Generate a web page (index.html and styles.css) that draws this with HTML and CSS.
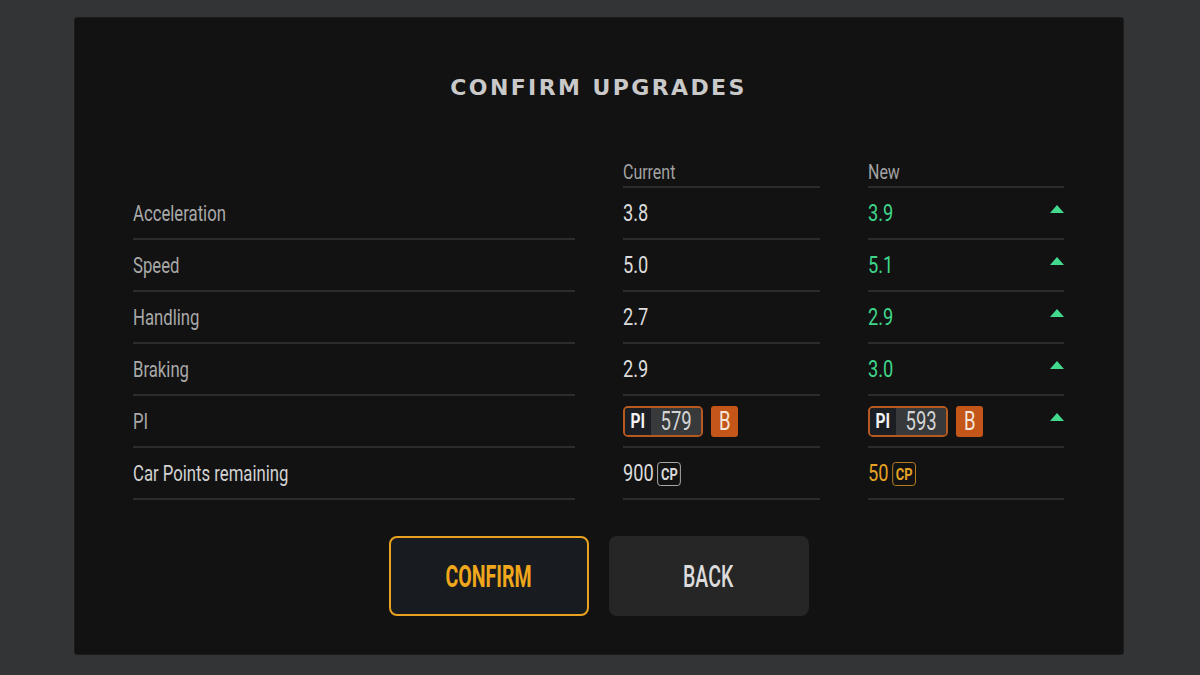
FILE: index.html
```html
<!DOCTYPE html>
<html>
<head>
<meta charset="utf-8">
<link rel="stylesheet" href="styles.css">
</head>
<body>
<div class="panel">
  <h1 class="title">CONFIRM UPGRADES</h1>
  <div class="table">
    <div class="cell head blank"></div>
    <div class="cell head"><span class="t">Current</span></div>
    <div class="cell head"><span class="t">New</span></div>

    <div class="cell label"><span class="t">Acceleration</span></div>
    <div class="cell val"><span class="t">3.8</span></div>
    <div class="cell val up"><span class="t">3.9</span><span class="tri"></span></div>

    <div class="cell label"><span class="t">Speed</span></div>
    <div class="cell val"><span class="t">5.0</span></div>
    <div class="cell val up"><span class="t">5.1</span><span class="tri"></span></div>

    <div class="cell label"><span class="t">Handling</span></div>
    <div class="cell val"><span class="t">2.7</span></div>
    <div class="cell val up"><span class="t">2.9</span><span class="tri"></span></div>

    <div class="cell label"><span class="t">Braking</span></div>
    <div class="cell val"><span class="t">2.9</span></div>
    <div class="cell val up"><span class="t">3.0</span><span class="tri"></span></div>

    <div class="cell label"><span class="t">PI</span></div>
    <div class="cell val"><span class="pi"><span class="pi-tag"><span class="tc">PI</span></span><span class="pi-num"><span class="tc">579</span></span></span><span class="cls"><span class="tc">B</span></span></div>
    <div class="cell val spread"><span class="picell"><span class="pi"><span class="pi-tag"><span class="tc">PI</span></span><span class="pi-num"><span class="tc">593</span></span></span><span class="cls"><span class="tc">B</span></span></span><span class="tri"></span></div>

    <div class="cell label white"><span class="t">Car Points remaining</span></div>
    <div class="cell val"><span class="t">900<span class="cp">CP</span></span></div>
    <div class="cell val gold"><span class="t">50<span class="cp gold-cp">CP</span></span></div>
  </div>
  <div class="buttons">
    <div class="btn confirm"><span class="tc">CONFIRM</span></div>
    <div class="btn back"><span class="tc">BACK</span></div>
  </div>
</div>
</body>
</html>
```
FILE: styles.css
```css
html, body {
  margin: 0;
  padding: 0;
}
body {
  width: 1200px;
  height: 675px;
  background: #333436;
  padding: 17px 76px 20px 74px;
  box-sizing: border-box;
  font-family: Roboto, "DejaVu Sans", sans-serif;
}
.panel {
  width: 1050px;
  height: 638px;
  box-sizing: border-box;
  background: #121212;
  border: 1px solid #1c1c1c;
  border-radius: 3px;
  padding: 54px 59px 0 58px;
  display: flex;
  flex-direction: column;
}
.title {
  margin: 0;
  height: 32px;
  line-height: 32px;
  text-align: center;
  font-family: "DejaVu Sans", sans-serif;
  font-weight: bold;
  font-size: 22px;
  letter-spacing: 2.4px;
  color: #c9c9c9;
}
.t {
  display: inline-block;
  white-space: nowrap;
  transform: scaleX(0.76);
  transform-origin: 0 50%;
}
.tc {
  display: inline-block;
  white-space: nowrap;
  transform: scaleX(0.74);
  transform-origin: 50% 50%;
}
.table {
  margin-top: 48px;
  display: grid;
  grid-template-columns: 442px 197px 196px;
  column-gap: 48px;
}
.cell {
  height: 50px;
  border-bottom: 2px solid #2c2c2c;
  display: flex;
  align-items: center;
  font-size: 22px;
}
.cell.head {
  height: 34px;
  line-height: 27px;
  color: #a3a3a3;
  font-size: 21px;
  align-items: flex-end;
}
.cell.blank {
  border-bottom-color: transparent;
}
.label {
  color: #a9a9a9;
}
.label.white {
  color: #d2d2d2;
}
.val {
  color: #dcdcdc;
  font-size: 24px;
}
.up {
  color: #3fd58a;
  justify-content: space-between;
}
.spread {
  justify-content: space-between;
}
.picell {
  display: flex;
  align-items: center;
}
.tri {
  width: 0;
  height: 0;
  border-left: 7.5px solid transparent;
  border-right: 7.5px solid transparent;
  border-bottom: 8px solid #42d88e;
  margin-bottom: 8px;
}
.pi {
  display: inline-flex;
  height: 31px;
  box-sizing: border-box;
  border: 2px solid #b65a22;
  border-radius: 5px;
  overflow: hidden;
}
.pi-tag {
  width: 26px;
  background: #1b1f23;
  color: #f2f2f2;
  font-weight: bold;
  font-size: 21px;
  display: flex;
  align-items: center;
  justify-content: center;
}
.pi-num {
  width: 50px;
  background: #37393b;
  color: #d4d4d4;
  font-size: 25px;
  display: flex;
  align-items: center;
  justify-content: center;
}
.cls {
  margin-left: 8px;
  width: 27px;
  height: 31px;
  background: #c4561a;
  border-radius: 3px;
  color: #f5e6da;
  font-size: 25px;
  display: flex;
  align-items: center;
  justify-content: center;
}
.cp {
  margin-left: 5px;
  width: 31px;
  height: 24px;
  box-sizing: border-box;
  border: 1.8px solid #bdbdbd;
  border-radius: 4px;
  font-size: 17px;
  font-weight: bold;
  color: #d8d8d8;
  display: inline-flex;
  align-items: center;
  justify-content: center;
  vertical-align: 1px;
}
.gold {
  color: #e6a224;
}
.gold-cp {
  border-color: #c98a1e;
  color: #e6a224;
}
.buttons {
  margin-top: 36px;
  display: flex;
  justify-content: center;
  gap: 20px;
}
.btn {
  width: 200px;
  height: 80px;
  box-sizing: border-box;
  border-radius: 8px;
  display: flex;
  align-items: center;
  justify-content: center;
  font-size: 32px;
}
.btn .tc {
  transform: scaleX(0.61);
}
.confirm {
  background: #181c20;
  border: 2px solid #e9a21f;
  color: #f0a71c;
  font-weight: bold;
}
.back {
  background: #262626;
  color: #dcdcdc;
  font-weight: 500;
}
```
